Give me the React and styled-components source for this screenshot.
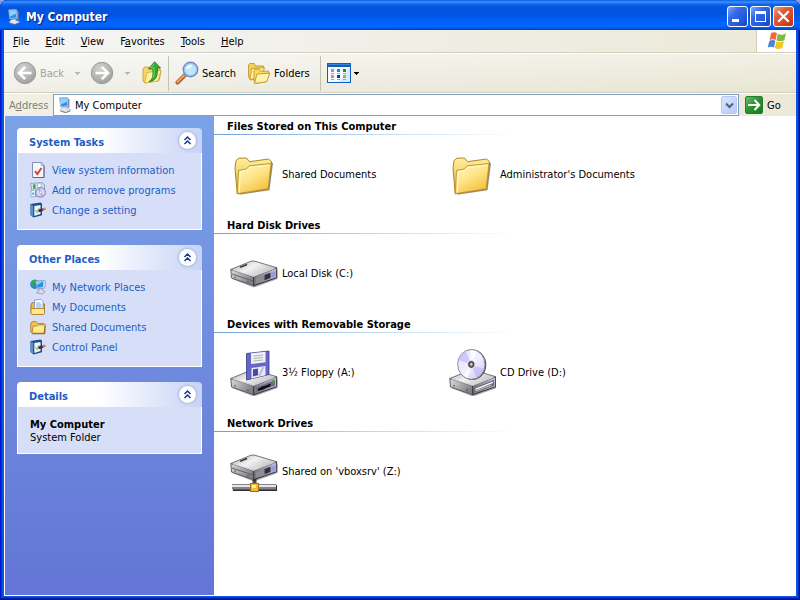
import styled, { createGlobalStyle, css } from "styled-components";

const uiFont = `Tahoma, "DejaVu Sans Condensed", "DejaVu Sans", sans-serif`;

// window icons
const ComputerIcon = ({ size = 16 }) => (
    <svg width={size} height={size} viewBox="0 0 16 16" aria-hidden="true">
        <path d="M10.500 1.500l2 .8v8l-2 1z" fill="#7d8fb4" />
        <path d="M2.500.8L10.600.3l.6 8.900-7.500.9z" fill="#cfe2f5" stroke="#6f8fc0" strokeWidth=".6" />
        <path d="M3.300 1.600l6.500-.4.6 7.200-6.100.8z" fill="#2f8fe8" />
        <path d="M3.300 1.600l6.500-.4.3 3.600L4 7.600z" fill="#8ed2fb" />
        <path d="M5.500 10.500l4-.5.6 1.500 3.400.9-.3 1.400-4.700 1.800-5-1.700v-1.200z" fill="#dfe4ee" stroke="#8692ac" strokeWidth=".5" />
        <path d="M3.600 14l5 1.700 4.700-1.800" fill="none" stroke="#4b5878" strokeWidth=".7" />
    </svg>
);

const WindowsFlag = () => (
    <svg width="20" height="20" viewBox="0 0 20 20" aria-hidden="true">
        <path d="M4 2.200C6.200.8 8 1 10 2.200L8.600 9C6.800 7.900 4.900 7.900 2.600 9z" fill="#f0683a" />
        <path d="M10.900 2.700c2.300 1.300 4.500 1.300 8.100-.3L17.300 9.200c-3 1.400-5.600 1.500-7.800.3z" fill="#7cbb3f" />
        <path d="M2.300 9.900c2.200-1.200 4.200-1.200 6.100-.1L7 16.500c-2-1-3.900-1.100-6.300.1z" fill="#4a86dc" />
        <path d="M9.300 10.300c2.400 1.200 4.700 1.200 7.700-.2l-1.600 6.700c-2.900 1.600-5.400 1.500-7.500.2z" fill="#f8c41f" />
    </svg>
);

const MinimizeGlyph = () => (
    <svg width="19" height="19" viewBox="0 0 19 19" aria-hidden="true"><path d="M4 12h7v3H4z" fill="#fff" /></svg>
);
const MaximizeGlyph = () => (
    <svg width="19" height="19" viewBox="0 0 19 19" aria-hidden="true"><path d="M4 4h11v11H4zM5 7v7h9V7z" fill="#fff" fillRule="evenodd" /></svg>
);
const CloseGlyph = () => (
    <svg width="19" height="19" viewBox="0 0 19 19" aria-hidden="true"><path d="M5 5l9 9M14 5l-9 9" stroke="#fff" strokeWidth="2.200" strokeLinecap="square" /></svg>
);

// toolbar icons
const NavArrow = ({ forward }) => (
    <svg width="24" height="24" viewBox="0 0 24 24" aria-hidden="true">
        <defs>
            <radialGradient id="navGrey" cx=".4" cy=".3" r=".75">
                <stop offset="0" stopColor="#d2d2d0" />
                <stop offset=".6" stopColor="#b5b5b3" />
                <stop offset="1" stopColor="#9b9b99" />
            </radialGradient>
        </defs>
        <circle cx="12" cy="12" r="10.700" fill="url(#navGrey)" stroke="#9c9c9a" />
        <g transform={forward ? "matrix(-1 0 0 1 24 0)" : undefined} fill="none" stroke="#fff" strokeWidth="2.600">
            <path d="M6 12h12.500M12.200 5.800L6 12l6.200 6.200" />
        </g>
    </svg>
);

const UpFolderIcon = () => (
    <svg width="24" height="24" viewBox="0 0 24 24" aria-hidden="true">
        <path d="M3 8l1.500-2h4.500l1.500 2H20l1 3-2 8.500L5 22 3 20z" fill="#f6d76b" stroke="#c79a2b" strokeWidth=".8" />
        <path d="M7 11.500l14-2-3 10.500L4.500 22z" fill="#fff0a0" stroke="#d0a63a" strokeWidth=".8" />
        <path d="M9 20.500c3.500-1.500 4.300-5 3.900-12.500H8.500L14.600.800 20.500 7h-3.300c1 8.500-1.800 13-8.200 13.500z" fill="#35ae2c" stroke="#15701a" strokeWidth=".8" />
        <path d="M14.500 2.500l-4 4.500h3.300c.7 5 .2 8-1.300 10" fill="none" stroke="#8be26f" strokeWidth=".8" />
    </svg>
);

const SearchIcon = () => (
    <svg width="24" height="24" viewBox="0 0 24 24" aria-hidden="true">
        <path d="M10 14l-7.500 7.500" stroke="#a9582c" strokeWidth="4" strokeLinecap="round" />
        <path d="M9.500 14l-7 7" stroke="#f2a25c" strokeWidth="2" strokeLinecap="round" />
        <path d="M11.500 12.500l-2 2" stroke="#8da0bb" strokeWidth="3.500" />
        <circle cx="15.500" cy="8.500" r="7.200" fill="#bfe4fb" stroke="#7089c4" strokeWidth="1.400" />
        <circle cx="15.500" cy="8.500" r="6" fill="none" stroke="#8fc4f0" strokeWidth="1" />
        <path d="M11 8c.5-3 3-4.500 6-4-.5 2.500-3 4.500-6 4z" fill="#fff" opacity=".85" />
    </svg>
);

const FoldersIcon = () => (
    <svg width="24" height="24" viewBox="0 0 24 24" aria-hidden="true" stroke="#c4962b" strokeWidth=".9" strokeLinejoin="round">
        <path d="M1.500 16V4l1.200-1.500h4.500L8.500 5h8v3l-2 9-11 2z" fill="#f5d25c" />
        <path d="M4.500 7.500l13-.8-3 10L3 18.500z" fill="#fff0a4" />
        <path d="M7 20.500V9.500L8.200 8h4l1.400 2.200h8V13l-2 7.500-11 2z" fill="#f8d965" />
        <path d="M10 13l13-.8-3.500 8.600-12 1.700z" fill="#fff2ab" />
    </svg>
);

const ViewsIcon = () => (
    <svg width="24" height="20" viewBox="0 0 24 20" aria-hidden="true" shapeRendering="crispEdges">
        <rect x="0" y="0" width="24" height="20" rx="1" fill="#0f5fc0" />
        <rect x="1" y="1" width="22" height="1" fill="#3d85da" />
        <rect x="1" y="4" width="22" height="15" fill="#f4faff" />
        <path d="M23 4v15H12z" fill="#d5eafc" />
        <rect x="4" y="6" width="3" height="3" fill="#9a92c5" />
        <rect x="10" y="6" width="3" height="3" fill="#1c86d8" />
        <rect x="16" y="6" width="3" height="3" fill="#1e8a28" />
        <rect x="4" y="12" width="3" height="3" fill="#e88462" />
        <rect x="10" y="12" width="3" height="3" fill="#0b3d9c" />
        <rect x="16" y="12" width="3" height="3" fill="#c5a32c" />
        <path d="M4 10h3v1H4zM10 10h3v1h-3zM16 10h3v1h-3zM4 16h3v1H4zM10 16h3v1h-3zM16 16h3v1h-3z" fill="#9ba4b2" />
    </svg>
);

const GoArrow = () => (
    <svg width="16" height="16" viewBox="0 0 16 16" aria-hidden="true">
        <path d="M2 8h11M8.500 3L13.300 8l-4.800 5" fill="none" stroke="#fff" strokeWidth="2" />
    </svg>
);

const Caret = () => (
    <svg width="5" height="3" viewBox="0 0 5 3" aria-hidden="true" shapeRendering="crispEdges"><path d="M0 0h5v1H4v1H3v1H2V2H1V1H0z" fill="currentColor" /></svg>
);
const DropArrow = () => (
    <svg width="9" height="7" viewBox="0 0 9 7" aria-hidden="true"><path d="M1 1.500l3.500 3.500L8 1.500" fill="none" stroke="#4d6185" strokeWidth="2" /></svg>
);
const Chevrons = () => (
    <svg width="17" height="17" viewBox="0 0 17 17" aria-hidden="true">
        <path d="M5.500 8L8.500 5l3 3M5.500 12l3-3 3 3" fill="none" stroke="#14398c" strokeWidth="1.500" />
    </svg>
);

// task pane icons
const InfoIcon = () => (
    <svg width="16" height="16" viewBox="0 0 16 16" aria-hidden="true">
        <path d="M2.500.5h9l2.500 2.700V15.500H2.500z" fill="#f5f8fe" stroke="#8291b4" />
        <path d="M14 4v11.500H3" fill="none" stroke="#56678f" />
        <path d="M11.300.8v2.700H14" fill="#c8d3e8" stroke="#8291b4" strokeWidth=".7" />
        <path d="M5 9l2.300 3L11.500 6" fill="none" stroke="#d8452d" strokeWidth="2" />
    </svg>
);

const ProgramsIcon = () => (
    <svg width="16" height="16" viewBox="0 0 16 16" aria-hidden="true">
        <path d="M.5 1.500L12 .5l2.500 2v11L3 14.500z" fill="#d3def0" stroke="#8398bd" strokeWidth=".8" />
        <path d="M3 2.500l2.500-.3.200 4.500-2.500.3z" fill="#44a648" />
        <path d="M7.500 2l3.500-.4.2 3.500-3.500.5z" fill="#fff" stroke="#7f9ac4" strokeWidth=".5" />
        <path d="M1 8.500l4.500-.5v6.500L1 15z" fill="#f3f6fb" stroke="#708cba" strokeWidth=".6" />
        <path d="M2 10.500l2.500-.3v2.600l-2.500.3z" fill="#8fb4e4" />
        <circle cx="10.600" cy="10.400" r="4.800" fill="#dcdcf7" stroke="#6b7299" strokeWidth=".9" />
        <path d="M10.600 10.400L7.500 7.500a4 4 0 013-1.400zM10.600 10.400l3.200 3a4 4 0 01-3.200 1.200z" fill="#a9a8ea" />
        <circle cx="10.600" cy="10.400" r="1.300" fill="#fff" stroke="#8088b0" strokeWidth=".5" />
    </svg>
);

const SettingIcon = () => (
    <svg width="16" height="16" viewBox="0 0 16 16" aria-hidden="true">
        <path d="M.5 2L10.500.5l1.500 1v11.700L3.500 15.600.5 13z" fill="#1f4c86" />
        <path d="M.5 2l2.700 1.800v11.500L.5 13z" fill="#5d8fc9" />
        <path d="M4.300 4l6.200-1v9l-6.200 1.900z" fill="#edf5ff" />
        <path d="M5.500 8l1.500 2.500L9.300 6" fill="none" stroke="#c6b05b" strokeWidth="1.200" />
        <path d="M8.500 9l4.500-1.500" stroke="#17305c" strokeWidth="2.400" />
        <path d="M12.500 7.600l3-1" stroke="#d27a4c" strokeWidth="2.200" />
    </svg>
);

const NetworkIcon = () => (
    <svg width="16" height="16" viewBox="0 0 16 16" aria-hidden="true">
        <circle cx="4.800" cy="5.300" r="4.600" fill="#2582cf" />
        <path d="M1 3c1.500-2.500 4-2.500 5.500-2L5.500 4l-2 1L4 8 1.500 7z" fill="#38a74a" />
        <path d="M5.500 2l8.500-.7 1.500.9-.8 7-8 .8z" fill="#d7e6f6" stroke="#6582b3" strokeWidth=".6" />
        <path d="M6.300 2.800l7.200-.6-.6 6-6 .6z" fill="#2d91e3" />
        <path d="M6.300 2.800l7.200-.6-6.900 4z" fill="#8bd5f8" />
        <path d="M8.500 10l3.500-.4.5 1.700 2.500 1.200-2.500 2.700-6-1.500 2.500-1.700z" fill="#d9dce9" stroke="#7c7fa7" strokeWidth=".6" />
    </svg>
);

const DocumentsIcon = () => (
    <svg width="16" height="16" viewBox="0 0 16 16" aria-hidden="true" strokeLinejoin="round">
        <path d="M1 5l2-1.500h2L6 5h8.500v9.500L13.500 15.500H2L1 14.500z" fill="#e9bb49" stroke="#99671c" strokeWidth=".8" />
        <path d="M4.500 1L11 .5l2 2v9h-8.500z" fill="#fff" stroke="#6688b9" strokeWidth=".7" />
        <path d="M6 4h4.500M6 6h5.500M6 8h5.500" stroke="#659be0" strokeWidth=".9" />
        <path d="M1 9.500h12.500l1 1v4l-1 1H2l-1-1z" fill="#ffe58c" stroke="#a97724" strokeWidth=".8" />
    </svg>
);

const SmallFolderIcon = () => (
    <svg width="16" height="16" viewBox="0 0 16 16" aria-hidden="true" strokeLinejoin="round">
        <path d="M.8 13V4.200L2 2.700h4.200L7.600 4.500h6.200l1 1v8.700H2z" fill="#efc452" stroke="#a9781f" strokeWidth=".8" />
        <path d="M3.200 7h4l1.200-1.200h7L14 14.200H2z" fill="#ffe991" stroke="#a9781f" strokeWidth=".8" />
        <path d="M2.500 14.800h12.300V7" fill="none" stroke="#785514" strokeWidth=".7" />
    </svg>
);

// drive and folder icons, 48px
const DriveGradients = () => (
    <defs>
        <linearGradient id="driveTop" x1="0" y1="0" x2="1" y2=".6">
            <stop offset="0" stopColor="#a4a4a6" />
            <stop offset=".5" stopColor="#f2f2f3" />
            <stop offset="1" stopColor="#bdbdc1" />
        </linearGradient>
        <linearGradient id="driveLeft" x1="0" y1="0" x2="1" y2=".5">
            <stop offset="0" stopColor="#dcdcde" />
            <stop offset="1" stopColor="#808084" />
        </linearGradient>
        <linearGradient id="driveFront" x1="0" y1="0" x2="1" y2="0">
            <stop offset="0" stopColor="#77777d" />
            <stop offset="1" stopColor="#bcbce6" />
        </linearGradient>
    </defs>
);

// case shared by every drive, drawn with its top corner at y=12
const DriveCase = () => (
    <g strokeLinejoin="round">
        <path d="M2 30l22 8.500L47.500 30V21z" fill="#000" opacity=".35" />
        <path d="M.8 20.500l22.900 7.200v9L1.500 29z" fill="url(#driveLeft)" stroke="#55555a" strokeWidth=".9" />
        <path d="M23.700 27.700l23-9v10l-23 8z" fill="url(#driveFront)" stroke="#333338" strokeWidth="1" />
        <path d="M.8 20.500L21 12.200l3-.2 22.700 6.700-23 9z" fill="url(#driveTop)" stroke="#66666b" strokeWidth=".9" />
        <path d="M3 21l20.700 6.400L44.500 19.400" fill="none" stroke="#fff" strokeWidth=".8" opacity=".8" />
    </g>
);

const HardDiskFace = () => (
    <g>
        <path d="M2 25l21.500 7.200" stroke="#5b5b60" strokeWidth=".9" />
        <path d="M26 29.500l8-3v4.500l-8 3z" fill="#8d8d94" />
        <path d="M34.500 26l6-2.300v5.300l-6 2.200z" fill="#303038" />
        <path d="M41.500 23.500l4-1.500v5.500l-4 1.500z" fill="#9a9ad8" />
        <path d="M10 18.400l7-2.900" stroke="#2e2e33" strokeWidth="1.400" />
        <path d="M5 27.500v1.500M18 32v1.500" stroke="#444" />
    </g>
);

const FolderIcon = () => (
    <svg width="48" height="48" viewBox="0 0 48 48" aria-hidden="true" strokeLinejoin="round">
        <defs>
            <linearGradient id="folderFront" x1="0" y1="0" x2=".6" y2="1">
                <stop offset="0" stopColor="#fff6b8" />
                <stop offset=".5" stopColor="#ffe68d" />
                <stop offset="1" stopColor="#f4c13e" />
            </linearGradient>
            <linearGradient id="folderBack" x1="0" y1="0" x2="0" y2="1">
                <stop offset="0" stopColor="#fff09c" />
                <stop offset="1" stopColor="#e3ae35" />
            </linearGradient>
        </defs>
        <path d="M9 44.700l30.500-4.500 3.500-27-2-1z" fill="#474022" opacity=".6" />
        <path d="M5 18l1-7.500 3-2.300 7.500-.2 3 3.700L38.500 9l3 2.500-3.300 27.300-31 5z" fill="url(#folderBack)" stroke="#ad8526" />
        <path d="M7.300 43.700L8.500 20.500 16.300 19l3-3.200 21.700-2.300-2.800 25.300z" fill="url(#folderFront)" stroke="#b8912f" strokeWidth=".9" />
        <path d="M9.300 42.300l1-20.500 6.600-1.300 3-3.200 19.600-2" fill="none" stroke="#fffbd8" strokeWidth=".9" />
    </svg>
);

const HardDiskIcon = () => (
    <svg width="48" height="48" viewBox="0 0 48 48" aria-hidden="true">
        <DriveGradients />
        <DriveCase />
        <HardDiskFace />
    </svg>
);

const FloppyIcon = () => (
    <svg width="48" height="48" viewBox="0 0 48 48" aria-hidden="true">
        <DriveGradients />
        <g transform="translate(0 10)">
            <DriveCase />
            <path d="M26 29.500L45 22v5.500l-19 6.700z" fill="#6b6b84" />
            <path d="M28 31l4-2.500 2-.2 7-2.800-1 3-4 1.300-2 1.500-6 1.700z" fill="#0b0b0e" />
            <circle cx="43.500" cy="22.800" r="1.400" fill="#4cad2d" />
            <path d="M5 27v1.500M18 31.500v1.500" stroke="#333" />
        </g>
        <path d="M16.500 5.500L39 3v23.500L16.500 32z" fill="#6666c8" stroke="#3a3a7d" strokeWidth=".8" />
        <path d="M21 5.300L35.500 3.700v10.500L21 16z" fill="#f1f1f3" />
        <path d="M23.500 8l9.500-1M23.500 10.500l9.500-1M23.500 13l9.500-1" stroke="#a0a0aa" strokeWidth=".8" />
        <path d="M21.500 20l14-2v9.300l-14 3.400z" fill="#e9e9f6" />
        <path d="M23 21.300l5-.7v6.700l-5 1.200z" fill="#4848a6" />
        <path d="M29 28l4.500-9" stroke="#bcbce6" strokeWidth="2" />
    </svg>
);

const CdIcon = () => (
    <svg width="48" height="48" viewBox="0 0 48 48" aria-hidden="true">
        <DriveGradients />
        <defs>
            <linearGradient id="discFace" x1="0" y1="0" x2="1" y2="1">
                <stop offset="0" stopColor="#dcdaff" />
                <stop offset=".5" stopColor="#f3f0fd" />
                <stop offset="1" stopColor="#c6c3f8" />
            </linearGradient>
        </defs>
        <g transform="translate(1 10)">
            <DriveCase />
            <path d="M25.500 29.700l19.500-7.700v5.500l-19.500 7z" fill="#66666d" />
            <path d="M26.500 30.500l17.500-7v1.500l-17.500 7z" fill="#fff" />
            <path d="M26.500 33l16-6" stroke="#d0d0d8" />
            <path d="M5 27v1.500M18 31.500v1.500" stroke="#333" />
        </g>
        <ellipse cx="24.300" cy="16.700" rx="14" ry="15.200" fill="#55555c" />
        <ellipse cx="23.300" cy="16.400" rx="13.700" ry="14.900" fill="url(#discFace)" stroke="#85858f" strokeWidth=".9" />
        <path d="M23.300 16.400L10.500 12c1-4 3.500-7.300 7-9zM23.300 16.400l12.500 4.500c-1.500 4-4 7-7.500 8.800z" fill="#b9b6f4" opacity=".6" />
        <path d="M23.300 16.400L22 2.300c3-.3 5 .4 7 1.700zM23.300 16.400l-8 11.200 4.500 2.600z" fill="#fff" opacity=".8" />
        <ellipse cx="23.300" cy="16.400" rx="4.200" ry="4.500" fill="#f5d9ee" />
        <ellipse cx="23.300" cy="16.400" rx="2.700" ry="3" fill="#6a6a70" stroke="#39393e" />
        <circle cx="23.300" cy="16.400" r="1.100" fill="#e9e9e9" />
    </svg>
);

const NetworkDriveIcon = () => (
    <svg width="48" height="48" viewBox="0 0 48 48" aria-hidden="true">
        <DriveGradients />
        <path d="M22.500 30h4v8h-4z" fill="#4c4c52" />
        <g transform="translate(0 -4)">
            <DriveCase />
            <HardDiskFace />
        </g>
        <path d="M3 38h44v6H3z" fill="#2e2e33" />
        <path d="M2 37h44v5.500H2z" fill="#84848a" />
        <path d="M2 38h44v2H2z" fill="#e6e6ec" />
        <rect x="20.500" y="36.500" width="8" height="8" fill="#f4bb32" stroke="#9c6e12" />
        <path d="M22 38h4v3h-4z" fill="#fff0a0" />
    </svg>
);

const menus = [
    ["F", "", "ile"],
    ["E", "", "dit"],
    ["V", "", "iew"],
    ["a", "F", "vorites"],
    ["T", "", "ools"],
    ["H", "", "elp"],
];

const panes = [
    {
        title: "System Tasks",
        links: [
            { icon: <InfoIcon />, text: "View system information" },
            { icon: <ProgramsIcon />, text: "Add or remove programs" },
            { icon: <SettingIcon />, text: "Change a setting" },
        ],
    },
    {
        title: "Other Places",
        links: [
            { icon: <NetworkIcon />, text: "My Network Places" },
            { icon: <DocumentsIcon />, text: "My Documents" },
            { icon: <SmallFolderIcon />, text: "Shared Documents" },
            { icon: <SettingIcon />, text: "Control Panel" },
        ],
    },
];

const groups = [
    {
        title: "Files Stored on This Computer",
        items: [
            { icon: <FolderIcon />, text: "Shared Documents" },
            { icon: <FolderIcon />, text: "Administrator's Documents" },
        ],
    },
    { title: "Hard Disk Drives", items: [{ icon: <HardDiskIcon />, text: "Local Disk (C:)" }] },
    {
        title: "Devices with Removable Storage",
        items: [
            { icon: <FloppyIcon />, text: "3½ Floppy (A:)" },
            { icon: <CdIcon />, text: "CD Drive (D:)" },
        ],
    },
    { title: "Network Drives", items: [{ icon: <NetworkDriveIcon />, text: "Shared on 'vboxsrv' (Z:)" }] },
];

const Pane = ({ title, children }) => (
    <PaneBox>
        <PaneHeader>
            <PaneTitle>{title}</PaneTitle>
            <Collapse type="button" aria-label={`Collapse ${title}`}><Chevrons /></Collapse>
        </PaneHeader>
        {children}
    </PaneBox>
);

const App = () => (
    <>
        <GlobalStyle />
        <Window>
            <TitleBar>
                <ComputerIcon />
                <Title>My Computer</Title>
                <Control type="button" aria-label="Minimize"><MinimizeGlyph /></Control>
                <Control type="button" aria-label="Maximize"><MaximizeGlyph /></Control>
                <Control type="button" aria-label="Close" $close><CloseGlyph /></Control>
            </TitleBar>
            <Frame>
                <MenuBar>
                    <Menus>
                        {menus.map(([key, before, after]) => (
                            <MenuButton key={after} type="button">{before}<u>{key}</u>{after}</MenuButton>
                        ))}
                    </Menus>
                    <FlagBox><WindowsFlag /></FlagBox>
                </MenuBar>
                <ToolBar>
                    <ToolButton type="button" disabled $width={50}><NavArrow />Back</ToolButton>
                    <ArrowButton type="button" disabled aria-label="Back history"><Caret /></ArrowButton>
                    <ToolButton type="button" disabled aria-label="Forward" $width={24}><NavArrow forward /></ToolButton>
                    <ArrowButton type="button" disabled aria-label="Forward history"><Caret /></ArrowButton>
                    <ToolButton type="button" aria-label="Up" $width={24}><UpFolderIcon /></ToolButton>
                    <Separator />
                    <ToolButton type="button" $width={72}><SearchIcon />Search</ToolButton>
                    <ToolButton type="button" $width={69}><FoldersIcon />Folders</ToolButton>
                    <Separator />
                    <ToolButton type="button" aria-label="Views" $width={32}><ViewsIcon /><Caret /></ToolButton>
                </ToolBar>
                <AddressBar>
                    <AddressLabel htmlFor="address">A<u>d</u>dress</AddressLabel>
                    <AddressBox>
                        <ComputerIcon />
                        <AddressInput id="address" type="text" defaultValue="My Computer" />
                        <DropButton type="button" aria-label="Show addresses"><DropArrow /></DropButton>
                    </AddressBox>
                    <GoButton type="button"><GoSquare><GoArrow /></GoSquare>Go</GoButton>
                </AddressBar>
                <Content>
                    <Sidebar>
                        {panes.map(({ title, links }) => (
                            <Pane key={title} title={title}>
                                <PaneList>
                                    {links.map(({ icon, text }) => (
                                        <li key={text}><PaneLink href="#">{icon}{text}</PaneLink></li>
                                    ))}
                                </PaneList>
                            </Pane>
                        ))}
                        <Pane title="Details">
                            <DetailsBody>
                                <strong>My Computer</strong>
                                <span>System Folder</span>
                            </DetailsBody>
                        </Pane>
                    </Sidebar>
                    <Main>
                        {groups.map(({ title, items }) => (
                            <section key={title}>
                                <GroupTitle>{title}</GroupTitle>
                                <Items>
                                    {items.map(({ icon, text }) => (
                                        <Item key={text} href="#">{icon}{text}</Item>
                                    ))}
                                </Items>
                            </section>
                        ))}
                    </Main>
                </Content>
            </Frame>
        </Window>
    </>
);

export default App;

const GlobalStyle = createGlobalStyle`
    * {
        box-sizing: border-box;
    }
    body {
        margin: 0;
        background: #8ba0e0;
        font-family: ${uiFont};
        font-size: 11px;
        line-height: 13px;
        color: #000;
    }
    button, input {
        font: inherit;
        color: inherit;
        margin: 0;
        padding: 0;
        border: 0;
        background: none;
    }
    svg {
        display: block;
        flex: none;
    }
`
const row = css`
    display: flex;
    align-items: center;
`
const Window = styled.div`
    display: flex;
    flex-direction: column;
    min-height: 100vh;
    border-radius: 8px 8px 0 0;
    overflow: hidden;
    background: #0b52e6;
    box-shadow: inset 0 -1px #00138c, inset 0 -2px #001ea0, inset 1px 0 #0019cf, inset -1px 0 #00138c, inset -2px 0 #0029b4, inset 0 -3px #0540c9, inset 2px 0 #0831d9;
`
const TitleBar = styled.header`
    ${row}
    gap: 2px;
    height: 30px;
    padding: 3px 6px 0 6px;
    background: linear-gradient(#0a5ce0 0, #3c92ff 2px, #1269ee 4px, #0355dd 7px, #0054e0 14px, #0061fb 21px, #0066ff 26px, #0058ee 28px, #0040c0 30px);
`
const Title = styled.h1`
    flex: 1;
    margin: 0;
    padding-left: 2px;
    font-family: "Trebuchet MS", "DejaVu Sans Condensed", sans-serif;
    font-size: 12px;
    line-height: 18px;
    font-weight: 700;
    color: #fff;
    text-shadow: 1px 1px 1px #0a1883;
`
const Control = styled.button`
    width: 21px;
    height: 21px;
    border: 1px solid #fff;
    border-radius: 3px;
    background: ${({ $close }) => $close
        ? "linear-gradient(135deg, #f0a088 0, #e2593a 35%, #d9441f 70%, #b8300c 100%)"
        : "linear-gradient(135deg, #7fa8f8 0, #3468e4 35%, #2459dc 70%, #1543bc 100%)"};
`
const Frame = styled.div`
    display: flex;
    flex-direction: column;
    flex: 1;
    margin: 0 4px 4px;
    background: linear-gradient(90deg, #f5f6f6, #efeee4 55%, #ece9d8);
`
const MenuBar = styled.nav`
    display: flex;
    height: 23px;
    border-bottom: 1px solid #d3cfbf;
`
const Menus = styled.div`
    display: flex;
    flex: 1;
    padding-left: 1px;
`
const MenuButton = styled.button`
    padding: 0 8px;
`
const FlagBox = styled.div`
    ${row}
    justify-content: center;
    width: 40px;
    border-left: 1px solid #d3cfbf;
    background: #fff;
`
const ToolBar = styled.div`
    ${row}
    height: 40px;
    padding: 0 9px;
    border-top: 1px solid #fff;
    border-bottom: 1px solid #d3cfbf;
    background: linear-gradient(rgba(255, 255, 255, .3), rgba(226, 221, 196, .3));
`
const ToolButton = styled.button`
    ${row}
    gap: 3px;
    min-width: ${({ $width }) => $width}px;
    height: 32px;
    white-space: nowrap;
    &:disabled {
        color: #a5a398;
    }
`
const ArrowButton = styled.button`
    ${row}
    justify-content: center;
    width: 26px;
    height: 32px;
    color: #b9b7aa;
`
const Separator = styled.span`
    width: 1px;
    height: 35px;
    margin: 0 6px 0 4px;
    background: #c5c2b2;
`
const AddressBar = styled.div`
    ${row}
    height: 23px;
    border-top: 1px solid #fff;
    background: rgba(236, 233, 216, .5);
`
const AddressLabel = styled.label`
    width: 49px;
    padding-left: 5px;
    color: #7f7d73;
`
const AddressBox = styled.div`
    ${row}
    flex: 1;
    height: 22px;
    padding: 0 1px 0 3px;
    border: 1px solid #7f9db9;
    background: #fff;
`
const AddressInput = styled.input`
    flex: 1;
    min-width: 0;
    height: 18px;
    padding-left: 2px;
    outline: none;
`
const DropButton = styled.button`
    ${row}
    justify-content: center;
    width: 16px;
    height: 18px;
    border: 1px solid #b5c8f5;
    border-radius: 2px;
    background: linear-gradient(135deg, #dbe6fe, #b7cbf7);
`
const GoButton = styled.button`
    ${row}
    gap: 4px;
    width: 57px;
    padding-left: 6px;
`
const GoSquare = styled.span`
    ${row}
    justify-content: center;
    width: 18px;
    height: 18px;
    border: 1px solid #267a2c;
    border-radius: 2px;
    background: linear-gradient(135deg, #6cbd6c, #2c9433 45%, #157a1f);
`
const Content = styled.div`
    display: flex;
    flex: 1;
    border: solid #fff;
    border-width: 0 0 1px 1px;
    background: #fff;
`
const Sidebar = styled.aside`
    display: flex;
    flex-direction: column;
    gap: 15px;
    width: 209px;
    padding: 12px;
    background: linear-gradient(#7ba2e7, #6375d6);
`
const PaneBox = styled.section`
    border-radius: 4px 4px 0 0;
    overflow: hidden;
`
const PaneHeader = styled.div`
    ${row}
    justify-content: space-between;
    height: 25px;
    padding: 0 6px 0 12px;
    background: linear-gradient(90deg, #fff 45%, #c6d3f7);
`
const PaneTitle = styled.h2`
    margin: 0;
    padding-top: 3px;
    font-size: 11px;
    color: #215dc6;
`
const Collapse = styled.button`
    width: 17px;
    height: 17px;
    border-radius: 50%;
    background: #fff;
    box-shadow: 0 0 2px 1px #a9b6dc;
`
const paneBody = css`
    margin: 0;
    border: solid #fff;
    border-width: 0 1px 1px;
    background: #d6dff7;
`
const PaneList = styled.ul`
    ${paneBody}
    padding: 7px 12px 9px;
    list-style: none;
`
const PaneLink = styled.a`
    ${row}
    gap: 6px;
    height: 20px;
    color: #215dc6;
    text-decoration: none;
    white-space: nowrap;
    &:hover {
        text-decoration: underline;
    }
`
const DetailsBody = styled.div`
    ${paneBody}
    display: flex;
    flex-direction: column;
    padding: 11px 12px 9px;
`
const Main = styled.main`
    flex: 1;
    min-width: 0;
`
const GroupTitle = styled.h2`
    margin: 0;
    height: 19px;
    padding: 4px 0 0 13px;
    font-size: 11px;
    background: linear-gradient(90deg, #70a0d8, #b8d6ef 150px, #fff 300px) bottom / 100% 1px no-repeat;
`
const Items = styled.div`
    display: flex;
    flex-wrap: wrap;
    padding: 15px 16px 17px;
`
const Item = styled.a`
    ${row}
    gap: 4px;
    width: 218px;
    color: #000;
    text-decoration: none;
`
